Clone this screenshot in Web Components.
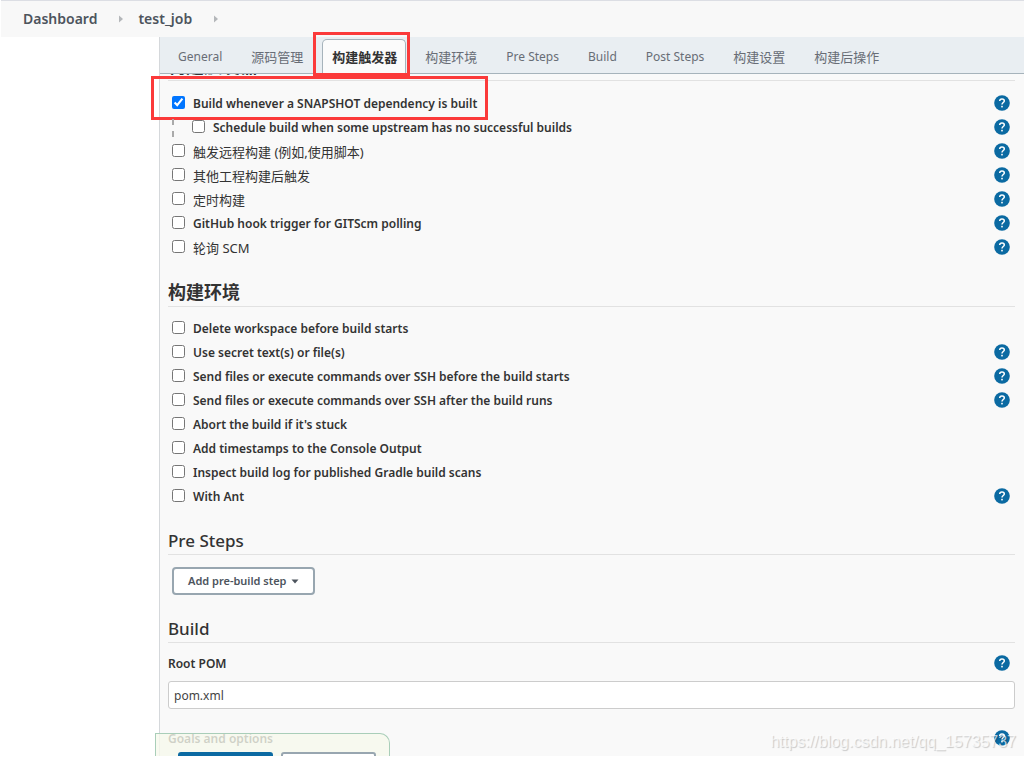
<!DOCTYPE html>
<html lang="en">
<head>
<meta charset="utf-8">
<title>test_job Config</title>
<style>
html, body {
  margin: 0;
  height: 100%;
}
body {
  background: #fff;
  color: #333;
  font: 12px/24px "Noto Sans", "Noto Sans CJK SC", sans-serif;
}
</style>
</head>
<body>

<job-page>
  <bread-crumbs slot="header">
    <a href="#dashboard">Dashboard</a>
    <a href="#test_job">test_job</a>
  </bread-crumbs>

  <tab-bar slot="tabs">
    <tab-item>General</tab-item>
    <tab-item lang="zh">源码管理</tab-item>
    <tab-item lang="zh" active>构建触发器</tab-item>
    <tab-item lang="zh">构建环境</tab-item>
    <tab-item>Pre Steps</tab-item>
    <tab-item>Build</tab-item>
    <tab-item>Post Steps</tab-item>
    <tab-item lang="zh">构建设置</tab-item>
    <tab-item lang="zh">构建后操作</tab-item>
  </tab-bar>

  <form-section>
    <span slot="title" lang="zh">构建触发器</span>
    <check-row checked marked help>Build whenever a SNAPSHOT dependency is built</check-row>
    <check-row nested help>Schedule build when some upstream has no successful builds</check-row>
    <check-row lang="zh" help>触发远程构建 (例如,使用脚本)</check-row>
    <check-row lang="zh" help>其他工程构建后触发</check-row>
    <check-row lang="zh" help>定时构建</check-row>
    <check-row help>GitHub hook trigger for GITScm polling</check-row>
    <check-row lang="zh" help>轮询 SCM</check-row>
  </form-section>

  <form-section>
    <span slot="title" lang="zh">构建环境</span>
    <check-row>Delete workspace before build starts</check-row>
    <check-row help>Use secret text(s) or file(s)</check-row>
    <check-row help>Send files or execute commands over SSH before the build starts</check-row>
    <check-row help>Send files or execute commands over SSH after the build runs</check-row>
    <check-row>Abort the build if it's stuck</check-row>
    <check-row>Add timestamps to the Console Output</check-row>
    <check-row>Inspect build log for published Gradle build scans</check-row>
    <check-row help>With Ant</check-row>
  </form-section>

  <form-section>
    <span slot="title">Pre Steps</span>
    <menu-button>Add pre-build step</menu-button>
  </form-section>

  <form-section>
    <span slot="title">Build</span>
    <text-entry value="pom.xml">Root POM</text-entry>
    <text-entry>Goals and options</text-entry>
  </form-section>

  <save-bar slot="footer"></save-bar>
  <span slot="watermark">https://blog.csdn.net/qq_15735737</span>
</job-page>

<script>
// base class: stamps the html of the subclass into an open shadow root
class BaseElement extends HTMLElement {
  constructor() {
    super();
    const template = document.createElement('template');
    template.innerHTML = `<style>* { box-sizing: border-box; }</style>` + this.constructor.html;
    this.attachShadow({mode: 'open'});
    this.shadowRoot.appendChild(template.content.cloneNode(true));
  }
}

class JobPage extends BaseElement {
  static html = `
<style>
:host {
  display: block;
  height: 100%;
  padding-bottom: 4px;
  box-sizing: border-box;
}
.page {
  position: relative;
  display: flex;
  flex-direction: column;
  height: 100%;
  overflow: hidden;
}
.columns {
  flex: 1;
  display: flex;
  min-height: 0;
}
aside {
  flex: 0 0 159px;
}
main {
  flex: 1;
  display: flex;
  flex-direction: column;
  min-width: 0;
  border-left: 1px solid #d5d8db;
  background: #f9f9f9;
}
.view {
  flex: 1;
  min-height: 0;
  overflow-x: visible;
  overflow-y: clip;
}
/* the form is scrolled a little, its first title is half under the tabs */
form {
  margin-top: -21px;
  padding: 0 9px 0 8px;
}
.footer {
  position: absolute;
  left: 155px;
  bottom: -15px;
}
.watermark {
  position: absolute;
  right: 8px;
  bottom: 2px;
  font: 16px/24px "Liberation Sans", sans-serif;
  color: rgba(255, 255, 255, 0.7);
  text-shadow: 1px 1px 1px rgba(0, 0, 0, 0.2);
  pointer-events: none;
}
</style>
<div class="page">
  <slot name="header"></slot>
  <div class="columns">
    <aside></aside>
    <main>
      <slot name="tabs"></slot>
      <div class="view">
        <form><slot></slot></form>
      </div>
    </main>
  </div>
  <div class="footer"><slot name="footer"></slot></div>
  <div class="watermark"><slot name="watermark"></slot></div>
</div>`;
}

class BreadCrumbs extends BaseElement {
  static html = `
<style>
:host {
  display: block;
  flex: none;
  margin-left: 1px;
  border-top: 1px solid #dcdee4;
  background: #f8f8f8;
}
nav {
  display: flex;
  align-items: center;
  height: 36px;
  padding-left: 22px;
}
::slotted(a) {
  display: flex;
  align-items: center;
  margin-right: 15px;
  color: #4d545d;
  font-size: 14px;
  font-weight: 600;
  text-decoration: none;
}
</style>
<nav aria-label="Breadcrumb"><slot></slot></nav>`;

  connectedCallback() {
    // small arrow after each link
    this.querySelectorAll('a').forEach(a => a.appendChild(document.createElement('crumb-arrow')));
  }
}

class CrumbArrow extends BaseElement {
  static html = `
<style>
:host { display: flex; margin-left: 22px; }
</style>
<svg width="4" height="8" viewBox="0 0 4 8"><path d="M0 0.5 L4 4 L0 7.5 Z" fill="#b4b7ba"/></svg>`;
}

class TabBar extends BaseElement {
  static html = `
<style>
:host {
  position: relative;
  z-index: 1;
  display: block;
  flex: none;
  border-bottom: 1px solid #a6b3bb;
  background: #e9eef2;
}
nav {
  display: flex;
  gap: 9px;
  height: 36px;
  padding: 2px 8px 0;
}
</style>
<nav role="tablist"><slot></slot></nav>`;
}

class TabItem extends BaseElement {
  static html = `
<style>
:host { display: flex; }
:host(:lang(zh)) { font-size: 13px; }
button {
  position: relative;
  padding: 0 9px;
  border: 1px solid transparent;
  border-bottom: 0;
  border-radius: 5px 5px 0 0;
  background: none;
  color: #686d76;
  font: inherit;
  white-space: nowrap;
}
:host([active]) button {
  margin-bottom: -1px;
  padding: 0 8px 0 9px;
  border-color: #a6b3bb;
  background: #fbfbfb;
  color: #333;
  font-weight: 700;
}
:host([active]) button::after {
  content: "";
  position: absolute;
  inset: -8px -5px -2px -10px;
  border: 3px solid #fb3a3a;
}
</style>
<button type="button" role="tab"><slot></slot></button>`;

  connectedCallback() {
    this.shadowRoot.querySelector('button').setAttribute('aria-selected', this.hasAttribute('active'));
  }
}

class FormSection extends BaseElement {
  static html = `
<style>
:host {
  display: block;
  margin-bottom: 19px;
}
h2 {
  margin: 0 0 10px;
  border-bottom: 1px solid #e2e2e2;
  font-size: 17px;
  font-weight: 500;
  line-height: 26px;
}
h2 ::slotted([lang=zh]) {
  font-size: 18px;
  font-weight: 700;
}
</style>
<h2><slot name="title"></slot></h2>
<slot></slot>`;
}

class HelpButton extends BaseElement {
  static html = `
<style>
:host {
  display: flex;
  margin: 0 5px 2px 0;
}
button {
  display: flex;
  padding: 0;
  border: 0;
  background: none;
}
</style>
<button type="button" aria-label="Help">
  <svg width="16" height="16" viewBox="0 0 16 16">
    <circle cx="8" cy="8" r="7.8" fill="#0b6aa2"/>
    <path d="M5.7 6.1 C5.7 4.6 6.7 3.9 8 3.9 C9.4 3.9 10.3 4.7 10.3 5.9 C10.3 7.5 8 7.6 8 9.6" fill="none" stroke="#fff" stroke-width="1.5"/>
    <rect x="7.2" y="10.8" width="1.6" height="1.6" fill="#fff"/>
  </svg>
</button>`;
}

class CheckRow extends BaseElement {
  static html = `
<style>
:host {
  display: flex;
  align-items: center;
  justify-content: space-between;
  padding-left: 4px;
  line-height: 24px;
  font-weight: 600;
}
:host(:lang(zh)) {
  font-size: 13px;
  font-weight: 400;
}
:host([marked]) { line-height: 25px; }
.left {
  position: relative;
  display: flex;
  align-items: center;
}
label {
  display: flex;
  align-items: center;
  gap: 8px;
}
input {
  width: 13px;
  height: 13px;
  margin: 0 0 3px;
}
:host([nested]) .left::before {
  content: "";
  width: 18px;
  height: 18px;
  border-left: 2px dashed #aaa;
}
:host([marked]) .left::after {
  content: "";
  position: absolute;
  inset: -15px -11px -4px -21px;
  border: 3px solid #fb3a3a;
  pointer-events: none;
}
help-button { display: none; }
:host([help]) help-button { display: flex; }
</style>
<div class="left">
  <label><input type="checkbox"><span><slot></slot></span></label>
</div>
<help-button></help-button>`;

  connectedCallback() {
    this.shadowRoot.querySelector('input').checked = this.hasAttribute('checked');
  }
}

class MenuButton extends BaseElement {
  static html = `
<style>
:host {
  display: flex;
  padding: 2px 4px;
}
button {
  display: flex;
  align-items: center;
  gap: 4px;
  height: 28px;
  padding: 0 14px;
  border: 2px solid #98a6b0;
  border-radius: 4px;
  background: #fff;
  color: #4d545d;
  font: inherit;
  font-size: 11px;
  font-weight: 600;
}
</style>
<button type="button"><slot></slot>
  <svg width="8" height="5" viewBox="0 0 8 5"><path d="M0.5 0.5 H7.5 L4 4.5 Z" fill="#4d545d"/></svg>
</button>`;
}

class TextEntry extends BaseElement {
  static html = `
<style>
:host {
  display: block;
  margin-bottom: 19px;
}
.head {
  display: flex;
  align-items: center;
  justify-content: space-between;
  line-height: 22px;
  font-weight: 600;
}
input {
  display: block;
  width: 100%;
  height: 28px;
  margin-top: 6px;
  padding: 0 5px;
  border: 1px solid #ccc;
  border-radius: 3px;
  background: #fff;
  color: #444;
  font: inherit;
}
</style>
<div class="head">
  <label for="entry"><slot></slot></label>
  <help-button></help-button>
</div>
<input id="entry" type="text">`;

  connectedCallback() {
    this.shadowRoot.querySelector('input').value = this.getAttribute('value') || '';
  }
}

// floating bar, its buttons run out below the window
class SaveBar extends BaseElement {
  static html = `
<style>
:host {
  display: flex;
  gap: 8px;
  padding: 18px 13px 0 22px;
  border: 1px solid #a9ceb9;
  border-bottom: 0;
  border-radius: 0 10px 0 0;
  background: rgba(246, 249, 236, 0.8);
}
button {
  width: 95px;
  height: 19px;
  border: 2px solid #98a6b0;
  border-radius: 3px 3px 0 0;
  background: #fff;
}
.primary {
  border-color: #0b6aa2;
  background: #0b6aa2;
}
</style>
<button type="button" class="primary" aria-label="Save"></button>
<button type="button" aria-label="Apply"></button>`;
}

window.customElements.define('help-button', HelpButton);
window.customElements.define('crumb-arrow', CrumbArrow);
window.customElements.define('bread-crumbs', BreadCrumbs);
window.customElements.define('tab-item', TabItem);
window.customElements.define('tab-bar', TabBar);
window.customElements.define('check-row', CheckRow);
window.customElements.define('menu-button', MenuButton);
window.customElements.define('text-entry', TextEntry);
window.customElements.define('form-section', FormSection);
window.customElements.define('save-bar', SaveBar);
window.customElements.define('job-page', JobPage);
</script>
</body>
</html>
